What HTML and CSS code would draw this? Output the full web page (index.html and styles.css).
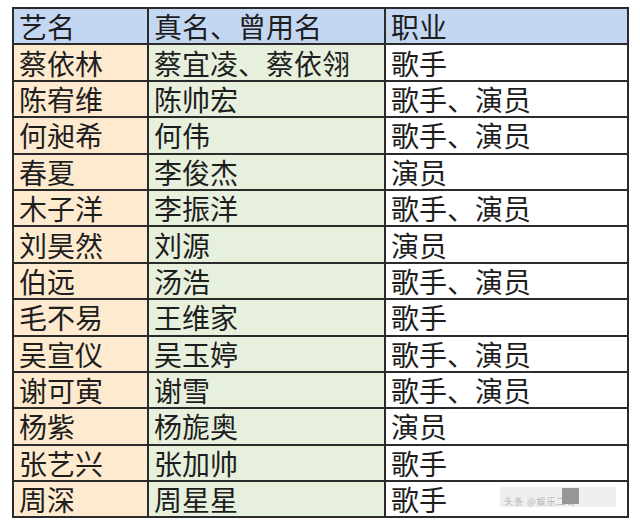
FILE: index.html
```html
<!DOCTYPE html>
<html lang="zh">
<head>
<meta charset="utf-8">
<link rel="stylesheet" href="styles.css">
</head>
<body>
<div class="wrap">
<table class="names">
  <colgroup><col class="c1"><col class="c2"><col class="c3"></colgroup>
  <thead>
    <tr><th>艺名</th><th>真名、曾用名</th><th>职业</th></tr>
  </thead>
  <tbody>
    <tr><td>蔡依林</td><td>蔡宜凌、蔡依翎</td><td>歌手</td></tr>
    <tr><td>陈宥维</td><td>陈帅宏</td><td>歌手、演员</td></tr>
    <tr><td>何昶希</td><td>何伟</td><td>歌手、演员</td></tr>
    <tr><td>春夏</td><td>李俊杰</td><td>演员</td></tr>
    <tr><td>木子洋</td><td>李振洋</td><td>歌手、演员</td></tr>
    <tr><td>刘昊然</td><td>刘源</td><td>演员</td></tr>
    <tr><td>伯远</td><td>汤浩</td><td>歌手、演员</td></tr>
    <tr><td>毛不易</td><td>王维家</td><td>歌手</td></tr>
    <tr><td>吴宣仪</td><td>吴玉婷</td><td>歌手、演员</td></tr>
    <tr><td>谢可寅</td><td>谢雪</td><td>歌手、演员</td></tr>
    <tr><td>杨紫</td><td>杨旎奥</td><td>演员</td></tr>
    <tr><td>张艺兴</td><td>张加帅</td><td>歌手</td></tr>
    <tr><td>周深</td><td>周星星</td><td>歌手</td></tr>
  </tbody>
</table>
<div class="mark"><span class="mark-text">头条 @娱乐二哥</span><span class="mark-box"></span></div>
</div>
</body>
</html>
```

FILE: styles.css
```css
html, body {
  margin: 0;
  padding: 0;
  background: #ffffff;
}
.wrap {
  position: relative;
  padding: 7px 0 0 12px;
  width: 640px;
  height: 529px;
  box-sizing: border-box;
}
.names {
  border-collapse: collapse;
  table-layout: fixed;
  width: 615px;
  font-family: "Noto Sans CJK SC", "Noto Sans", sans-serif;
  font-size: 28px;
  color: #1e1e1e;
}
.c1 { width: 135px; }
.c2 { width: 237px; }
.c3 { width: 243px; }
.names th, .names td {
  border: 2px solid #2b2b2b;
  height: 34.4px;
  padding: 0 0 0 5px;
  text-align: left;
  font-weight: 400;
  line-height: 34px;
  white-space: nowrap;
  vertical-align: middle;
}
.names th {
  background: #c4d7f2;
}
.names td:nth-child(1) { background: #fdeacf; }
.names td:nth-child(2) { background: #e7f0dd; }
.names td:nth-child(3) { background: #ffffff; }
.mark {
  position: absolute;
  left: 500px;
  top: 487px;
  width: 116px;
  height: 20px;
  background: #ececec;
  opacity: 0.8;
}
.mark-text {
  position: absolute;
  left: 4px;
  bottom: 0;
  font-family: "Noto Sans CJK SC", sans-serif;
  font-size: 9px;
  line-height: 10px;
  color: #a0a0a0;
  letter-spacing: 1px;
}
.mark-box {
  position: absolute;
  left: 62px;
  top: 1px;
  width: 17px;
  height: 16px;
  background: #7d7d7d;
}
```
